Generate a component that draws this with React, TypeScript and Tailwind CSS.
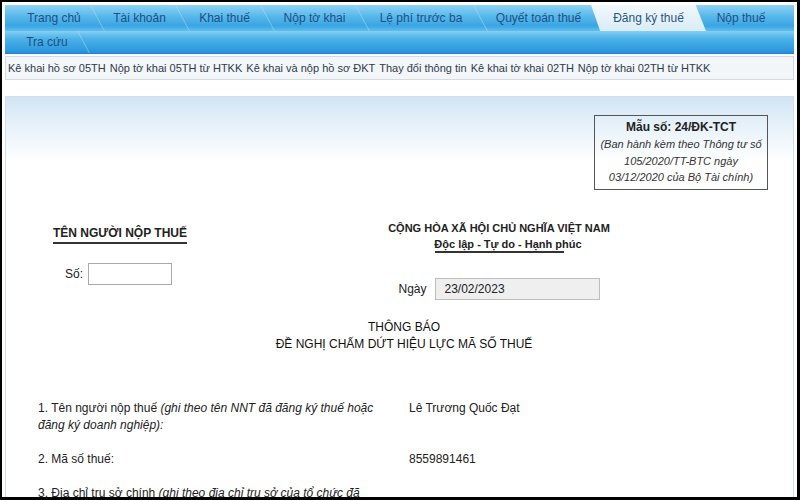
import React from "react";

const tabs = [
  { label: "Trang chủ", w: "w-[86px]" },
  { label: "Tài khoản", w: "w-[85px]" },
  { label: "Khai thuế", w: "w-[85px]" },
  { label: "Nộp tờ khai", w: "w-[95px]" },
  { label: "Lệ phí trước ba", w: "w-[118px]" },
  { label: "Quyết toán thuế", w: "w-[117px]" },
  { label: "Đăng ký thuế", w: "w-[115px]", active: true },
  { label: "Nộp thuế", w: "w-[82px]" },
];

const subLinks = [
  "Kê khai hồ sơ 05TH",
  "Nộp tờ khai 05TH từ HTKK",
  "Kê khai và nộp hồ sơ ĐKT",
  "Thay đổi thông tin",
  "Kê khai tờ khai 02TH",
  "Nộp tờ khai 02TH từ HTKK",
];

function Sep() {
  return <span className="w-px -mr-px self-stretch bg-[#b5e2f7]/50 skew-x-[28deg]" />;
}

function TopNav() {
  return (
    <div>
      <div className="h-[26px] flex items-stretch pl-[6px] bg-[linear-gradient(180deg,#8fd3f5_0%,#56b7ea_45%,#3aa5e3_80%,#5fbeec_100%)]">
        {tabs.map((t, i) => (
          <React.Fragment key={t.label}>
            {t.active ? (
              <div
                className={`${t.w} -mx-[6px] relative z-10 flex items-center justify-center text-[12px] text-[#2a5680] bg-[linear-gradient(180deg,#f1f8fc,#d9ecf6)] [clip-path:polygon(0_0,91%_0,100%_100%,8%_100%)]`}
              >
                {t.label}
              </div>
            ) : (
              <div className={`${t.w} flex items-center justify-center text-[12px] text-[#1d4f86]`}>
                {t.label}
              </div>
            )}
            {!t.active && i < tabs.length - 1 && !tabs[i + 1].active && <Sep />}
          </React.Fragment>
        ))}
      </div>
      <div className="h-[23px] flex items-stretch pl-[6px] border-b border-[#1f84cf] bg-[linear-gradient(180deg,#86cff2_0%,#4cb2e8_35%,#2f9bdf_85%,#2590d8_100%)]">
        <div className="w-[72px] flex items-center justify-center text-[12px] text-[#1d4f86]">Tra cứu</div>
        <Sep />
      </div>
    </div>
  );
}

function Field({ label, value }: { label: React.ReactNode; value?: string }) {
  return (
    <div className="flex mb-[17px]">
      <div className="w-[350px] leading-[17px]">{label}</div>
      <div className="ml-[21px] leading-[17px]">{value}</div>
    </div>
  );
}

export default function App() {
  return (
    <div
      className="w-[800px] h-[500px] overflow-hidden bg-white border-t-2 border-l-2 border-r-[3px] border-b-[3px] border-black pt-[3px] px-[3px] text-[#222]"
      style={{ fontFamily: '"Liberation Sans", Arial, sans-serif' }}
    >
      <TopNav />

      <div className="mt-[2px] h-[24px] flex items-center gap-[4px] px-[2px] bg-[#f3f6f8] border border-[#d3dbe1] text-[11px] text-[#2d3b4b] whitespace-nowrap">
        {subLinks.map((s) => (
          <span key={s}>{s}</span>
        ))}
      </div>

      <div className="mt-[16px] h-[420px] border-t border-l border-r border-[#d5dde5] bg-[linear-gradient(180deg,#d2e5f4_0px,#e8f2fa_30px,#ffffff_65px)]">
        <div className="flex justify-end pt-[18px] pr-[25px]">
          <div className="w-[174px] h-[75px] border border-[#555] flex flex-col items-center justify-center text-center">
            <div className="text-[12px] font-bold leading-[17px]">Mẫu số: 24/ĐK-TCT</div>
            <div className="text-[11px] italic leading-[16.5px] text-[#333]">
              (Ban hành kèm theo Thông tư số
              <br />
              105/2020/TT-BTC ngày
              <br />
              03/12/2020 của Bộ Tài chính)
            </div>
          </div>
        </div>

        <div className="flex mt-[30px]">
          <div className="w-[300px] pl-[47px]">
            <div className="inline-block text-[12px] font-bold leading-[17px] border-b-2 border-[#333]">
              TÊN NGƯỜI NỘP THUẾ
            </div>
            <div className="flex items-center mt-[19px] pl-[12px] gap-[5px]">
              <span className="text-[12px]">Số:</span>
              <div className="w-[84px] h-[22px] border border-[#a9a9a9] bg-white" />
            </div>
          </div>
          <div className="w-[386px] flex flex-col items-center">
            <div className="text-[11px] font-bold leading-[16px]">CỘNG HÒA XÃ HỘI CHỦ NGHĨA VIỆT NAM</div>
            <div className="text-[11px] font-bold leading-[16px] pl-[18px]">Độc lập - Tự do - Hạnh phúc</div>
            <div className="w-[129px] border-b-2 border-[#333] -mt-[1px]" />
            <div className="flex items-center gap-[8px] mt-[25px]">
              <span className="text-[12px]">Ngày</span>
              <div className="w-[165px] h-[22px] border border-[#bdbdbd] bg-[#efefef] flex items-center pl-[9px] text-[12px]">
                23/02/2023
              </div>
            </div>
          </div>
        </div>

        <div className="mt-[19px] pl-[9px] text-center text-[12px] leading-[17px] text-[#111]">
          <div>THÔNG BÁO</div>
          <div>ĐỀ NGHỊ CHẤM DỨT HIỆU LỰC MÃ SỐ THUẾ</div>
        </div>

        <div className="mt-[47px] pl-[32px] text-[12px] text-[#222]">
          <Field
            label={
              <>
                1. Tên người nộp thuế <i>(ghi theo tên NNT đã đăng ký thuế hoặc đăng ký doanh nghiệp):</i>
              </>
            }
            value="Lê Trương Quốc Đạt"
          />
          <Field label="2. Mã số thuế:" value="8559891461" />
          <Field
            label={
              <>
                3. Địa chỉ trụ sở chính <i>(ghi theo địa chỉ trụ sở của tổ chức đã đăng ký thuế):</i>
              </>
            }
          />
        </div>
      </div>
    </div>
  );
}
